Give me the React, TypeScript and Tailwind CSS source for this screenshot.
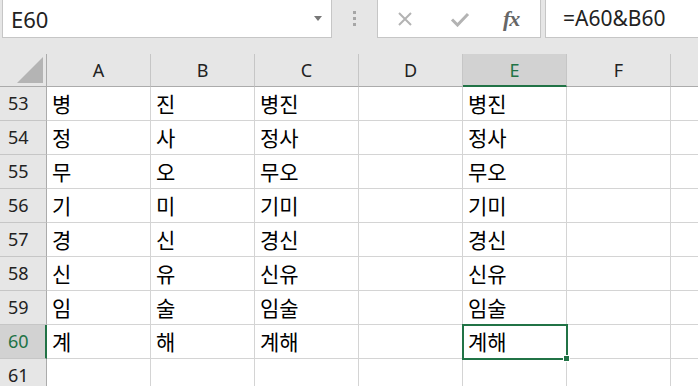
import React from 'react'

const cols = ['A', 'B', 'C', 'D', 'E', 'F', '']

const rows: { n: number; a: string; b: string; c: string; e: string }[] = [
    { n: 53, a: '병', b: '진', c: '병진', e: '병진' },
    { n: 54, a: '정', b: '사', c: '정사', e: '정사' },
    { n: 55, a: '무', b: '오', c: '무오', e: '무오' },
    { n: 56, a: '기', b: '미', c: '기미', e: '기미' },
    { n: 57, a: '경', b: '신', c: '경신', e: '경신' },
    { n: 58, a: '신', b: '유', c: '신유', e: '신유' },
    { n: 59, a: '임', b: '술', c: '임술', e: '임술' },
    { n: 60, a: '계', b: '해', c: '계해', e: '계해' },
    { n: 61, a: '', b: '', c: '', e: '' },
]

const latin = "font-['Noto_Sans','Noto_Sans_CJK_KR',sans-serif]"
const korean = "font-['Noto_Sans_CJK_KR','Noto_Sans',sans-serif]"

export default function App() {
    return (
        <div className={`w-[698px] h-[386px] overflow-hidden bg-[#e6e6e6] ${latin}`}>
            {/* formula bar */}
            <div className="flex h-[54px] items-start">
                <div className="ml-[2px] w-[330px] h-[38px] bg-white border border-t-0 border-[#c6c6c6] flex items-center justify-between pl-[8px] pr-[9px]">
                    <span className="text-[22px] leading-none text-[#222]">E60</span>
                    <span className="w-0 h-0 border-l-[4px] border-r-[4px] border-t-[5px] border-l-transparent border-r-transparent border-t-[#777]" />
                </div>
                <div className="w-[45px] flex flex-col items-center gap-[3px] pt-[11px]">
                    <span className="w-[3px] h-[3px] bg-[#a6a6a6]" />
                    <span className="w-[3px] h-[3px] bg-[#a6a6a6]" />
                    <span className="w-[3px] h-[3px] bg-[#a6a6a6]" />
                </div>
                <div className="w-[164px] h-[38px] bg-white border border-t-0 border-[#c6c6c6] flex items-center">
                    <svg width="16" height="16" viewBox="0 0 16 16" className="ml-[19px]">
                        <path d="M2 2 L14 14 M14 2 L2 14" stroke="#b3b3b3" strokeWidth="2" fill="none" />
                    </svg>
                    <svg width="20" height="16" viewBox="0 0 20 16" className="ml-[37px]">
                        <path d="M2 8.5 L7.5 14 L18 3" stroke="#b3b3b3" strokeWidth="3" fill="none" />
                    </svg>
                    <span className="ml-[33px] text-[22px] leading-none italic font-bold text-[#666] font-['Liberation_Serif',serif] tracking-[-1px]">fx</span>
                </div>
                <div className="ml-[4px] flex-1 h-[38px] bg-white border-l border-b border-[#c6c6c6] flex items-center pl-[17px]">
                    <span className="text-[21px] leading-none text-[#222]">=A60&amp;B60</span>
                </div>
            </div>

            {/* column headers */}
            <div className="flex h-[33px]">
                <div className="w-[47px] shrink-0 border-r border-b border-[#ababab] relative">
                    <span className="absolute left-[17px] top-[3px] w-0 h-0 border-b-[26px] border-l-[26px] border-l-transparent border-b-[#b4b4b4]" />
                </div>
                {cols.map((c, i) => (
                    <div
                        key={i}
                        className={`w-[104px] shrink-0 border-r border-r-[#c6c6c6] flex items-center justify-center text-[18px] ${
                            c === 'E'
                                ? 'bg-[#d2d2d2] text-[#217346] border-b-2 border-b-[#217346] pt-[1px]'
                                : 'text-[#222] border-b border-b-[#ababab]'
                        }`}
                    >
                        {c}
                    </div>
                ))}
            </div>

            {/* rows */}
            {rows.map((r) => {
                const sel = r.n === 60
                const vals = [r.a, r.b, r.c, '', r.e, '', '']
                return (
                    <div key={r.n} className="flex h-[34px]">
                        <div
                            className={`w-[47px] shrink-0 border-b border-[#c6c6c6] flex items-center pl-[8px] text-[18px] ${
                                sel ? 'bg-[#d2d2d2] text-[#217346] border-r-2 border-r-[#217346]' : 'border-r border-r-[#ababab] text-[#222]'
                            }`}
                        >
                            {r.n}
                        </div>
                        {vals.map((v, i) => (
                            <div
                                key={i}
                                className={`w-[104px] shrink-0 bg-white border-r border-b border-[#d4d4d4] flex items-center pl-[5px] text-[21px] text-black relative ${korean}`}
                            >
                                <span className="leading-none">{v}</span>
                                {sel && i === 4 && (
                                    <>
                                        <span className="absolute z-10 -left-[1px] -top-[1px] w-[106px] h-[36px] border-2 border-[#217346]" />
                                        <span className="absolute z-20 -right-[4px] -bottom-[4px] w-[7px] h-[7px] bg-[#217346] border border-white" />
                                    </>
                                )}
                            </div>
                        ))}
                    </div>
                )
            })}
        </div>
    )
}
